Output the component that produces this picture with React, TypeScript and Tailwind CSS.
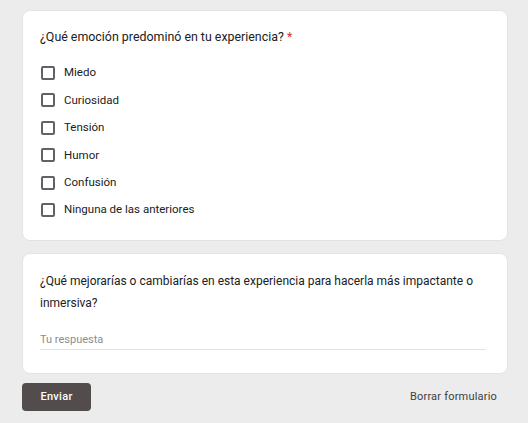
const OPTIONS = ['Miedo', 'Curiosidad', 'Tensión', 'Humor', 'Confusión', 'Ninguna de las anteriores'];

export default function App() {
  return (
    <div className="min-h-[423px] w-[528px] bg-[#ececec] pt-[10px] pl-[22px] pr-[20px] font-['Roboto',sans-serif] text-[#202124]">
      <div className="flex flex-col gap-[12px]">
        <div className="rounded-[8px] border border-[#e3e3e3] bg-white px-[17px] pt-[16px] pb-[20px]">
          <p className="text-[12.4px] leading-[20px]">
            ¿Qué emoción predominó en tu experiencia? <span className="text-[#d93025]">*</span>
          </p>
          <div className="mt-[16px] flex flex-col gap-[7.4px]">
            {OPTIONS.map((option) => (
              <label key={option} className="flex h-[20px] items-center gap-[9px] pl-[1px]">
                <span className="h-[14px] w-[14px] rounded-[2px] border-2 border-[#5f6368]" />
                <span className="text-[11.5px] text-[#202124]">{option}</span>
              </label>
            ))}
          </div>
        </div>

        <div className="rounded-[8px] border border-[#e3e3e3] bg-white px-[17px] pt-[16px] pb-[23px]">
          <p className="text-[12px] leading-[22px]">
            ¿Qué mejorarías o cambiarías en esta experiencia para hacerla más impactante o inmersiva?
          </p>
          <div className="mt-[18px] mr-[4px] border-b border-[#e3e3e3] pb-[1px]">
            <span className="block text-[11px] leading-[16px] text-[#8a8d91]">Tu respuesta</span>
          </div>
        </div>
      </div>

      <div className="mt-[9px] flex items-center justify-between pr-[11px]">
        <button className="h-[28px] w-[69px] rounded-[4px] bg-[#534c4c] text-[11px] font-medium tracking-[0.3px] text-white">
          Enviar
        </button>
        <span className="text-[11px] tracking-[0.2px] text-[#3c4043]">Borrar formulario</span>
      </div>
    </div>
  );
}
